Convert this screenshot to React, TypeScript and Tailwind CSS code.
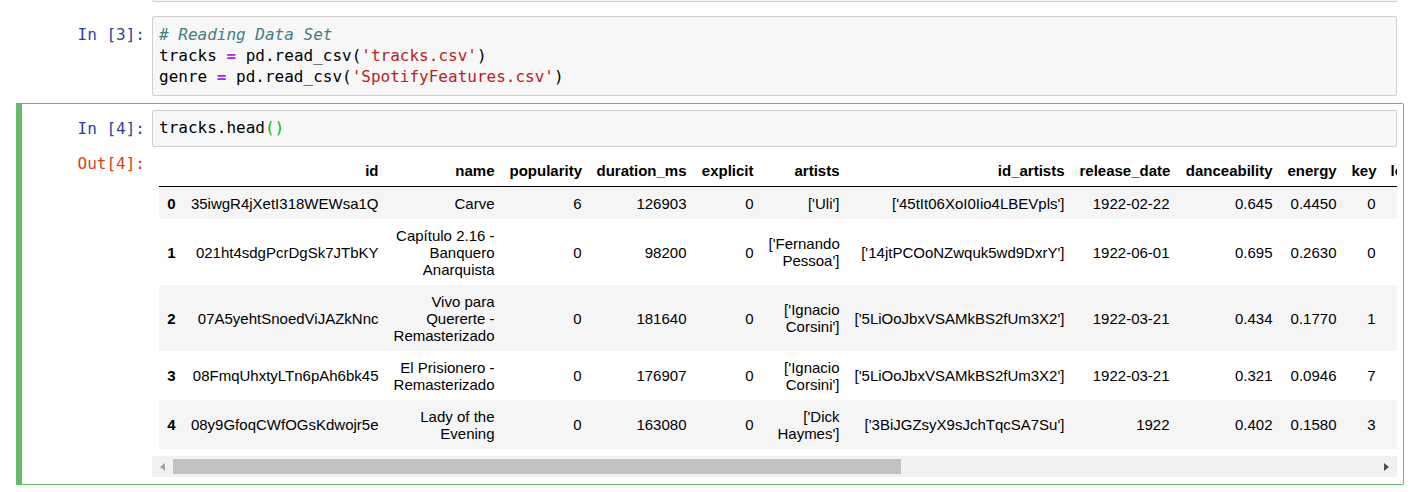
import React from "react"

const mono = { fontFamily: '"DejaVu Sans Mono", monospace' }

type Row = {
  idx: string
  cells: (string | string[])[]
}

const headers = [
  "",
  "id",
  "name",
  "popularity",
  "duration_ms",
  "explicit",
  "artists",
  "id_artists",
  "release_date",
  "danceability",
  "energy",
  "key",
  "loudness",
]

const colWidths = [
  "w-[24px]",
  "w-[203px]",
  "w-[116px]",
  "w-[87px]",
  "w-[105px]",
  "w-[67px]",
  "w-[86px]",
  "w-[225px]",
  "w-[105px]",
  "w-[103px]",
  "w-[64px]",
  "w-[39px]",
  "w-[80px]",
]

const rows: Row[] = [
  {
    idx: "0",
    cells: ["35iwgR4jXetI318WEWsa1Q", ["Carve"], "6", "126903", "0", ["['Uli']"], "['45tIt06XoI0Iio4LBEVpls']", "1922-02-22", "0.645", "0.4450", "0", "-13.338"],
  },
  {
    idx: "1",
    cells: ["021ht4sdgPcrDgSk7JTbKY", ["Capítulo 2.16 -", "Banquero", "Anarquista"], "0", "98200", "0", ["['Fernando", "Pessoa']"], "['14jtPCOoNZwquk5wd9DxrY']", "1922-06-01", "0.695", "0.2630", "0", "-22.136"],
  },
  {
    idx: "2",
    cells: ["07A5yehtSnoedViJAZkNnc", ["Vivo para", "Quererte -", "Remasterizado"], "0", "181640", "0", ["['Ignacio", "Corsini']"], "['5LiOoJbxVSAMkBS2fUm3X2']", "1922-03-21", "0.434", "0.1770", "1", "-21.180"],
  },
  {
    idx: "3",
    cells: ["08FmqUhxtyLTn6pAh6bk45", ["El Prisionero -", "Remasterizado"], "0", "176907", "0", ["['Ignacio", "Corsini']"], "['5LiOoJbxVSAMkBS2fUm3X2']", "1922-03-21", "0.321", "0.0946", "7", "-27.961"],
  },
  {
    idx: "4",
    cells: ["08y9GfoqCWfOGsKdwojr5e", ["Lady of the", "Evening"], "0", "163080", "0", ["['Dick", "Haymes']"], "['3BiJGZsyX9sJchTqcSA7Su']", "1922", "0.402", "0.1580", "3", "-16.900"],
  },
]

function Prompt({ label, num, out }: { label: string; num: number; out?: boolean }) {
  return (
    <div
      className={`w-[124px] shrink-0 text-right pr-[7px] text-[16px] leading-[21px] ${out ? "text-[#d84315] pt-[6px]" : "text-[#303f9f] pt-[8px]"}`}
      style={mono}
    >
      {label}[{num}]:
    </div>
  )
}

function Cell(props: { value: string | string[] }) {
  const v = props.value
  if (Array.isArray(v)) {
    return (
      <>
        {v.map((line, i) => (
          <div key={i} className="whitespace-nowrap">
            {line}
          </div>
        ))}
      </>
    )
  }
  return <span className="whitespace-nowrap">{v}</span>
}

function Scrollbar() {
  return (
    <div className="mt-[7px] h-[21px] w-[1245px] bg-[#f1f1f1] flex items-center">
      <div className="w-[21px] h-[21px] flex items-center justify-center">
        <div className="w-0 h-0 border-y-[4px] border-y-transparent border-r-[5px] border-r-[#a3a3a3]" />
      </div>
      <div className="w-[728px] h-[15px] bg-[#c1c1c1]" />
      <div className="flex-1" />
      <div className="w-[21px] h-[21px] flex items-center justify-center">
        <div className="w-0 h-0 border-y-[4px] border-y-transparent border-l-[5px] border-l-[#505050]" />
      </div>
    </div>
  )
}

export default function App() {
  return (
    <div className="w-[1422px] h-[492px] bg-white overflow-hidden">
      {/* tail of the previous cell */}
      <div className="ml-[152px] w-[1245px] h-[2px] border border-t-0 border-[#cfcfcf] bg-[#f7f7f7] rounded-b-[2px]" />

      {/* In [3] */}
      <div className="mt-[7px] ml-[16px] w-[1388px] border border-transparent border-l-[6px] p-[6px]">
        <div className="flex">
          <Prompt label="In " num={3} />
          <div
            className="flex-1 border border-[#cfcfcf] bg-[#f7f7f7] rounded-[2px] pl-[6px] pt-[7px] pb-[8px] text-[16px] leading-[21px] text-black whitespace-pre"
            style={mono}
          >
            <div className="text-[#408080] italic"># Reading Data Set</div>
            <div>
              tracks <span className="text-[#aa22ff] font-bold">=</span> pd.read_csv(
              <span className="text-[#ba2121]">'tracks.csv'</span>)
            </div>
            <div>
              genre <span className="text-[#aa22ff] font-bold">=</span> pd.read_csv(
              <span className="text-[#ba2121]">'SpotifyFeatures.csv'</span>)
            </div>
          </div>
        </div>
      </div>

      {/* In [4] / Out [4], selected */}
      <div className="ml-[16px] w-[1388px] border border-[#66bb6a] border-l-[6px] px-[6px] pt-[6px] pb-[7px] rounded-r-[2px]">
        <div className="flex">
          <Prompt label="In " num={4} />
          <div
            className="flex-1 border border-[#cfcfcf] bg-[#f7f7f7] rounded-[2px] pl-[6px] pt-[6px] pb-[8px] text-[16px] leading-[21px] text-black whitespace-pre"
            style={mono}
          >
            tracks.head<span className="text-[#00bb00]">()</span>
          </div>
        </div>

        <div className="flex">
          <Prompt label="Out" num={4} out />
          <div className="pt-[7px]">
            <div className="w-[1245px] overflow-hidden pl-[7px]">
              <table
                className="table-fixed border-collapse w-[1304px] text-[15px] leading-[17px] text-black"
                style={{ fontFamily: '"Liberation Sans", Arial, sans-serif' }}
              >
                <colgroup>
                  {colWidths.map((w, i) => (
                    <col key={i} className={w} />
                  ))}
                </colgroup>
                <thead>
                  <tr className="border-b border-black">
                    {headers.map((h, i) => (
                      <th key={i} className="px-[7.5px] py-[7.5px] text-right font-bold whitespace-nowrap align-middle">
                        {h}
                      </th>
                    ))}
                  </tr>
                </thead>
                <tbody>
                  {rows.map((r, ri) => (
                    <tr key={r.idx} className={ri % 2 === 0 ? "bg-[#f5f5f5]" : "bg-white"}>
                      <th className="px-[7.5px] py-[7.5px] text-right font-bold align-middle">{r.idx}</th>
                      {r.cells.map((c, ci) => (
                        <td key={ci} className="px-[7.5px] py-[7.5px] text-right align-middle">
                          <Cell value={c} />
                        </td>
                      ))}
                    </tr>
                  ))}
                </tbody>
              </table>
            </div>
            <Scrollbar />
          </div>
        </div>
      </div>
    </div>
  )
}
